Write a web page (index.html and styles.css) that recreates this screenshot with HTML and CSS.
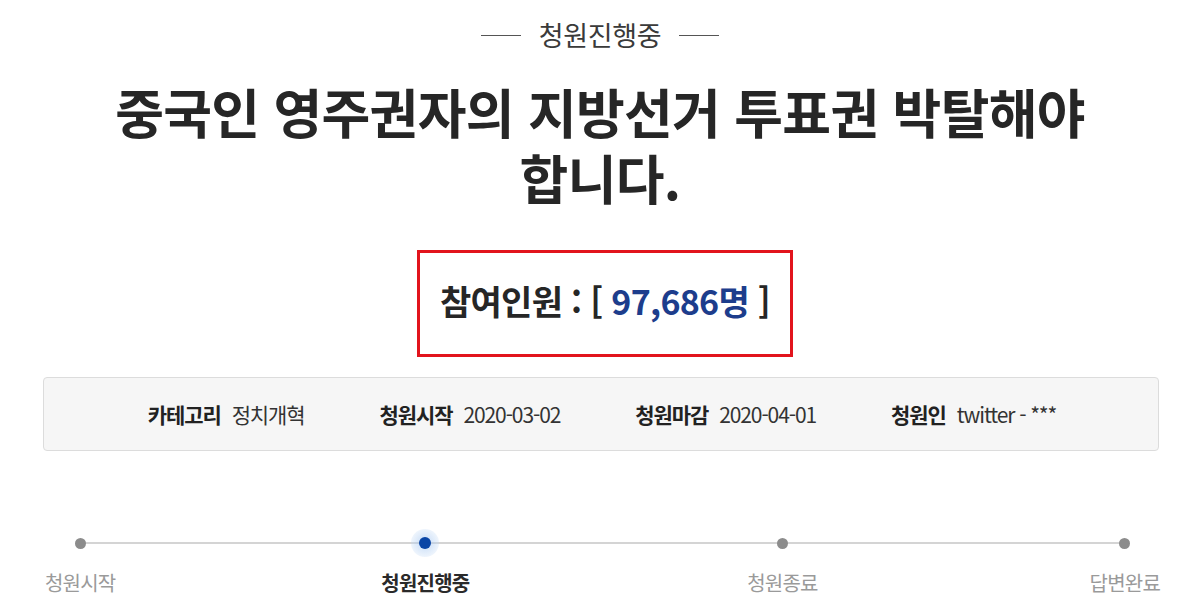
FILE: index.html
```html
<!DOCTYPE html>
<html lang="ko">
<head>
<meta charset="utf-8">
<link rel="stylesheet" href="styles.css">
</head>
<body>
<div class="page">
  <div class="status"><span class="dash"></span><span class="status-text">청원진행중</span><span class="dash"></span></div>
  <h1 class="title">중국인 영주권자의 지방선거 투표권 박탈해야<br>합니다.</h1>
  <div class="count-wrap">
    <div class="count-box">참여인원 : [ <span class="num">97,686명</span> ]</div>
  </div>
  <div class="info">
    <div class="item"><span class="label">카테고리</span><span class="value">정치개혁</span></div>
    <div class="item"><span class="label">청원시작</span><span class="value">2020-03-02</span></div>
    <div class="item"><span class="label">청원마감</span><span class="value">2020-04-01</span></div>
    <div class="item"><span class="label">청원인</span><span class="value">twitter - ***</span></div>
  </div>
  <div class="timeline">
    <div class="track"></div>
    <div class="step"><span class="dot"></span><span class="step-label">청원시작</span></div>
    <div class="step active"><span class="dot"></span><span class="step-label">청원진행중</span></div>
    <div class="step third"><span class="dot"></span><span class="step-label">청원종료</span></div>
    <div class="step"><span class="dot"></span><span class="step-label">답변완료</span></div>
  </div>
</div>
</body>
</html>
```
FILE: styles.css
```css
html, body {
  margin: 0;
  padding: 0;
  background: #ffffff;
}
body {
  font-family: "Noto Sans CJK KR", "Noto Sans", sans-serif;
  color: #2a2a2a;
}
.page {
  width: 1200px;
  height: 600px;
  overflow: hidden;
  display: flex;
  flex-direction: column;
}
.status {
  margin-top: 20px;
  display: flex;
  justify-content: center;
  align-items: center;
  gap: 18px;
  height: 30px;
}
.dash {
  width: 40px;
  height: 1px;
  background: #555;
}
.status-text {
  font-size: 27px;
  line-height: 30px;
  color: #3a3a3a;
  letter-spacing: -0.3px;
}
.title {
  margin: 28px 0 0;
  text-align: center;
  font-size: 53px;
  line-height: 66px;
  font-weight: 700;
  color: #262626;
  letter-spacing: -0.7px;
}
.count-wrap {
  margin-top: 40px;
  padding-left: 10px;
  display: flex;
  justify-content: center;
}
.count-box {
  width: 370px;
  height: 95px;
  padding-bottom: 6px;
  border: 3px solid #e2141d;
  display: flex;
  justify-content: center;
  align-items: center;
  font-size: 34px;
  font-weight: 700;
  color: #262626;
  letter-spacing: -0.7px;
  white-space: pre;
}
.num {
  color: #1d3d8c;
}
.info {
  margin: 20px 41px 0 43px;
  height: 72px;
  border: 1px solid #dcdcdc;
  border-radius: 4px;
  background: #f6f6f6;
  display: flex;
  justify-content: center;
  align-items: center;
  gap: 75px;
  font-size: 21px;
  letter-spacing: -1.1px;
  padding-left: 2px;
}
.item {
  display: flex;
  gap: 11px;
  align-items: center;
}
.label {
  font-weight: 700;
  color: #222;
}
.value {
  color: #333;
}
.timeline {
  position: relative;
  margin-top: 78px;
  padding: 0 40px 0 45px;
  display: flex;
  justify-content: space-between;
}
.track {
  position: absolute;
  left: 80px;
  right: 78px;
  top: 13px;
  height: 2px;
  background: #d4d4d4;
}
.step {
  position: relative;
  display: flex;
  flex-direction: column;
  align-items: center;
  gap: 13px;
}
.step.active {
  margin-right: 12px;
}
.step.third {
  margin-right: 6px;
}
.dot {
  width: 28px;
  height: 28px;
  display: flex;
  align-items: center;
  justify-content: center;
}
.dot::before {
  content: "";
  width: 11px;
  height: 11px;
  border-radius: 50%;
  background: #8c8c8c;
}
.step.active .dot {
  border-radius: 50%;
  background: radial-gradient(circle, rgba(150, 190, 240, 0.55) 0%, rgba(190, 215, 245, 0.35) 60%, rgba(220, 235, 250, 0) 100%);
}
.step.active .dot::before {
  width: 12px;
  height: 12px;
  background: #0a46a6;
}
.step-label {
  font-size: 20px;
  line-height: 26px;
  color: #9a9a9a;
  letter-spacing: -0.8px;
}
.step.active .step-label {
  color: #2a2a2a;
  font-weight: 700;
}
```
